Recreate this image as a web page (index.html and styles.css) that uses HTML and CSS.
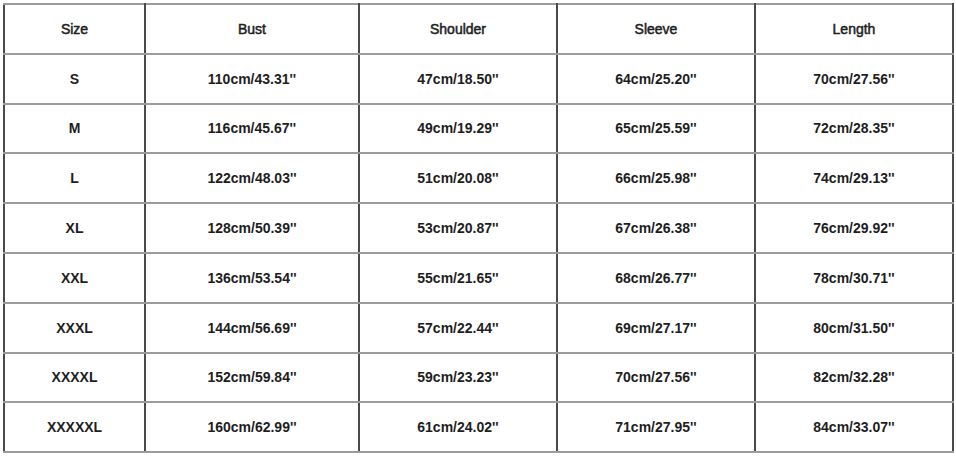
FILE: index.html
```html
<!DOCTYPE html>
<html>
<head>
<meta charset="utf-8">
<link rel="stylesheet" href="styles.css">
</head>
<body>
<table class="size-table">
  <colgroup>
    <col class="c-size"><col class="c-bust"><col class="c-std"><col class="c-std"><col class="c-std">
  </colgroup>
  <tr class="head"><td>Size</td><td>Bust</td><td>Shoulder</td><td>Sleeve</td><td>Length</td></tr>
  <tr><td>S</td><td>110cm/43.31''</td><td>47cm/18.50''</td><td>64cm/25.20''</td><td>70cm/27.56''</td></tr>
  <tr><td>M</td><td>116cm/45.67''</td><td>49cm/19.29''</td><td>65cm/25.59''</td><td>72cm/28.35''</td></tr>
  <tr><td>L</td><td>122cm/48.03''</td><td>51cm/20.08''</td><td>66cm/25.98''</td><td>74cm/29.13''</td></tr>
  <tr><td>XL</td><td>128cm/50.39''</td><td>53cm/20.87''</td><td>67cm/26.38''</td><td>76cm/29.92''</td></tr>
  <tr><td>XXL</td><td>136cm/53.54''</td><td>55cm/21.65''</td><td>68cm/26.77''</td><td>78cm/30.71''</td></tr>
  <tr><td>XXXL</td><td>144cm/56.69''</td><td>57cm/22.44''</td><td>69cm/27.17''</td><td>80cm/31.50''</td></tr>
  <tr><td>XXXXL</td><td>152cm/59.84''</td><td>59cm/23.23''</td><td>70cm/27.56''</td><td>82cm/32.28''</td></tr>
  <tr><td>XXXXXL</td><td>160cm/62.99''</td><td>61cm/24.02''</td><td>71cm/27.95''</td><td>84cm/33.07''</td></tr>
</table>
</body>
</html>
```
FILE: styles.css
```css
html, body {
  margin: 0;
  padding: 0;
  background: #ffffff;
}
body {
  padding: 3px 0 0 3px;
  font-family: "Liberation Sans", Arial, sans-serif;
}
.size-table {
  border-collapse: collapse;
  table-layout: fixed;
  width: 951px;
}
.c-size { width: 141px; }
.c-bust { width: 214px; }
.c-std { width: 198px; }
.size-table td {
  height: 47.8px;
  padding: 0;
  text-align: center;
  vertical-align: middle;
  font-size: 14px;
  font-weight: bold;
  color: #1e1e1e;
  border-left: 2px solid #4a4a4a;
  border-right: 2px solid #4a4a4a;
  border-top: 2px solid #9c9c9c;
  border-bottom: 2px solid #9c9c9c;
}
.size-table .head td {
  font-weight: normal;
  -webkit-text-stroke: 0.5px #1e1e1e;
}
```
